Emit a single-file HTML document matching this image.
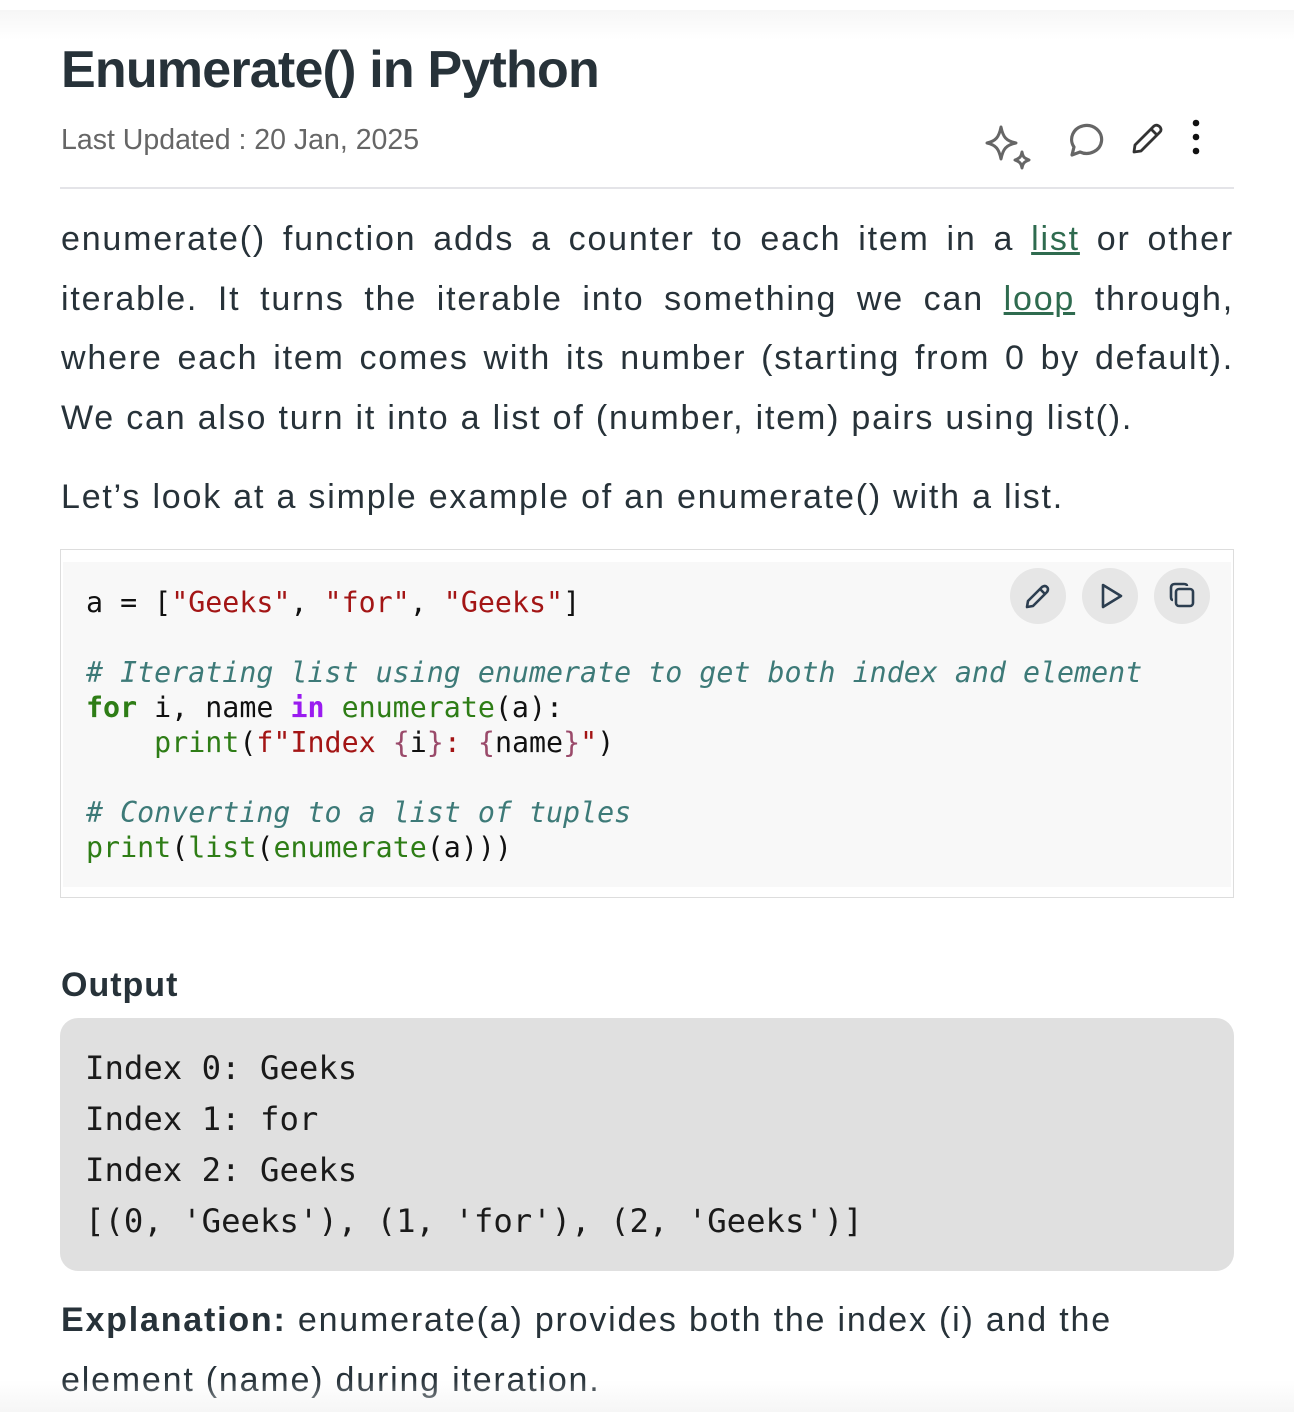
<!DOCTYPE html>
<html><head><meta charset="utf-8"><style>
body{margin:0;width:1294px;height:1412px;overflow:hidden;background:#fff;font-family:"Liberation Sans",sans-serif;color:#273239;position:relative}
.shadow{position:absolute;left:0;top:10px;width:1294px;height:30px;background:linear-gradient(#f6f6f6,#fff)}
h1{position:absolute;left:61px;top:38px;margin:0;font-size:52px;font-weight:bold;letter-spacing:-0.8px;line-height:64px}
.date{position:absolute;left:61px;top:124px;font-size:28.5px;color:#666}
.hr{position:absolute;left:60px;top:187px;width:1174px;height:2px;background:#e4e4e8}
.p{position:absolute;left:61px;width:1173px;font-size:34px;letter-spacing:1.8px;line-height:59.5px;color:#273239}
.j{display:block;text-align:justify;text-align-last:justify;white-space:nowrap}
.j2{display:block;white-space:nowrap}
a{color:#2f6b4f;text-decoration:underline}
.code{position:absolute;left:60px;top:549px;width:1172px;height:347px;border:1px solid #ddd;background:#fff}
.codein{position:absolute;left:2px;top:12px;width:1168px;height:325px;background:#f8f8f8}
pre{margin:0;font-family:"DejaVu Sans Mono",monospace;font-size:28.3px;line-height:35px;color:#111;position:absolute;left:25px;top:35px}
.s{color:#a31515}.c{color:#3d7a78;font-style:italic}.k{color:#2e7d16;font-weight:bold}.kw{color:#9a1bf0;font-weight:bold}.f{color:#2e7d16}.b{color:#9a4a6a}
.btn{position:absolute;top:568px;width:56px;height:56px;border-radius:50%;background:#e6e6e6}
.out-h{position:absolute;left:61px;top:966px;font-size:34px;letter-spacing:1px;font-weight:bold}
.out{position:absolute;left:60px;top:1018px;width:1174px;height:253px;background:#e0e0e0;border-radius:18px}
.out pre{font-size:32.3px;line-height:51px;left:25px;top:25px;color:#1a1a1a}
.fade{position:absolute;left:0;top:1380px;width:1294px;height:32px;background:linear-gradient(rgba(255,255,255,0),rgba(240,240,240,.6))}
</style></head><body>
<div class="shadow"></div>
<h1>Enumerate() in Python</h1>
<div class="date">Last Updated : 20 Jan, 2025</div>
<svg style="position:absolute;left:984px;top:124px" width="52" height="50" viewBox="0 0 52 50" fill="none" stroke="#666" stroke-width="3" stroke-linejoin="round"><path d="M17 3 C19 13 22 17 32 19 C22 21 19 25 17 35 C15 25 12 21 3 19 C12 17 15 13 17 3Z"/><path d="M38 28 C39 33 40 34 45 36 C40 38 39 39 38 44 C37 39 36 38 31 36 C36 34 37 33 38 28Z"/></svg>
<svg style="position:absolute;left:1066px;top:120px" width="40" height="40" viewBox="0 0 40 40" fill="none" stroke="#666" stroke-width="3.2" stroke-linejoin="round"><path d="M6 35 L8 27 A15 14 0 1 1 14 32 Z"/></svg>
<svg style="position:absolute;left:1130px;top:122px" width="36" height="34" viewBox="0 0 36 34" fill="none" stroke="#333" stroke-width="2.8" stroke-linejoin="round"><path d="M4 30 L5 23 L24 4 Q27 2 30 5 Q32 8 30 10 L11 29 Z M21 7 L27 13"/></svg>
<svg style="position:absolute;left:1186px;top:118px" width="20" height="40"><circle cx="10" cy="5" r="3.3" fill="#111"/><circle cx="10" cy="19" r="3.3" fill="#111"/><circle cx="10" cy="33" r="3.3" fill="#111"/></svg>
<div class="hr"></div>
<div class="p" style="top:210px">
<span class="j">enumerate() function adds a counter to each item in a <a>list</a> or other</span>
<span class="j">iterable. It turns the iterable into something we can <a>loop</a> through,</span>
<span class="j">where each item comes with its number (starting from 0 by default).</span>
<span class="j2">We can also turn it into a list of (number, item) pairs using list().</span>
</div>
<div class="p" style="top:468px"><span class="j2">Let’s look at a simple example of an enumerate() with a list.</span></div>
<div class="code"><div class="codein"></div>
<pre>a = [<span class="s">"Geeks"</span>, <span class="s">"for"</span>, <span class="s">"Geeks"</span>]

<span class="c"># Iterating list using enumerate to get both index and element</span>
<span class="k">for</span> i, name <span class="kw">in</span> <span class="f">enumerate</span>(a):
    <span class="f">print</span>(<span class="s">f"Index </span><span class="b">{</span>i<span class="b">}</span><span class="s">: </span><span class="b">{</span>name<span class="b">}</span><span class="s">"</span>)

<span class="c"># Converting to a list of tuples</span>
<span class="f">print</span>(<span class="f">list</span>(<span class="f">enumerate</span>(a)))</pre>
</div>
<div class="btn" style="left:1010px"></div><div class="btn" style="left:1082px"></div><div class="btn" style="left:1154px"></div>
<svg style="position:absolute;left:1024px;top:582px" width="28" height="28" viewBox="0 0 28 28" fill="none" stroke="#2c3e50" stroke-width="2.6" stroke-linejoin="round"><path d="M3 25 L4 19 L18 5 Q21 3 23 5 Q25 7 23 10 L9 24 Z M16 7 L21 12"/></svg>
<svg style="position:absolute;left:1098px;top:582px" width="28" height="28" viewBox="0 0 28 28" fill="none" stroke="#2c3e50" stroke-width="2.6" stroke-linejoin="round"><path d="M5 3 L23 14 L5 25 Z"/></svg>
<svg style="position:absolute;left:1168px;top:581px" width="30" height="30" viewBox="0 0 30 30" fill="none" stroke="#2c3e50" stroke-width="2.6"><rect x="8" y="8" width="17" height="17" rx="3"/><path d="M5 19 Q3 19 3 16 V7 Q3 3 7 3 H16 Q19 3 19 5"/></svg>
<div class="out-h">Output</div>
<div class="out"><pre>Index 0: Geeks
Index 1: for
Index 2: Geeks
[(0, 'Geeks'), (1, 'for'), (2, 'Geeks')]</pre></div>
<div class="p" style="top:1291px"><span class="j2"><b>Explanation:</b> enumerate(a) provides both the index (i) and the</span><span class="j2">element (name) during iteration.</span></div>
<div class="fade"></div>
</body></html>
